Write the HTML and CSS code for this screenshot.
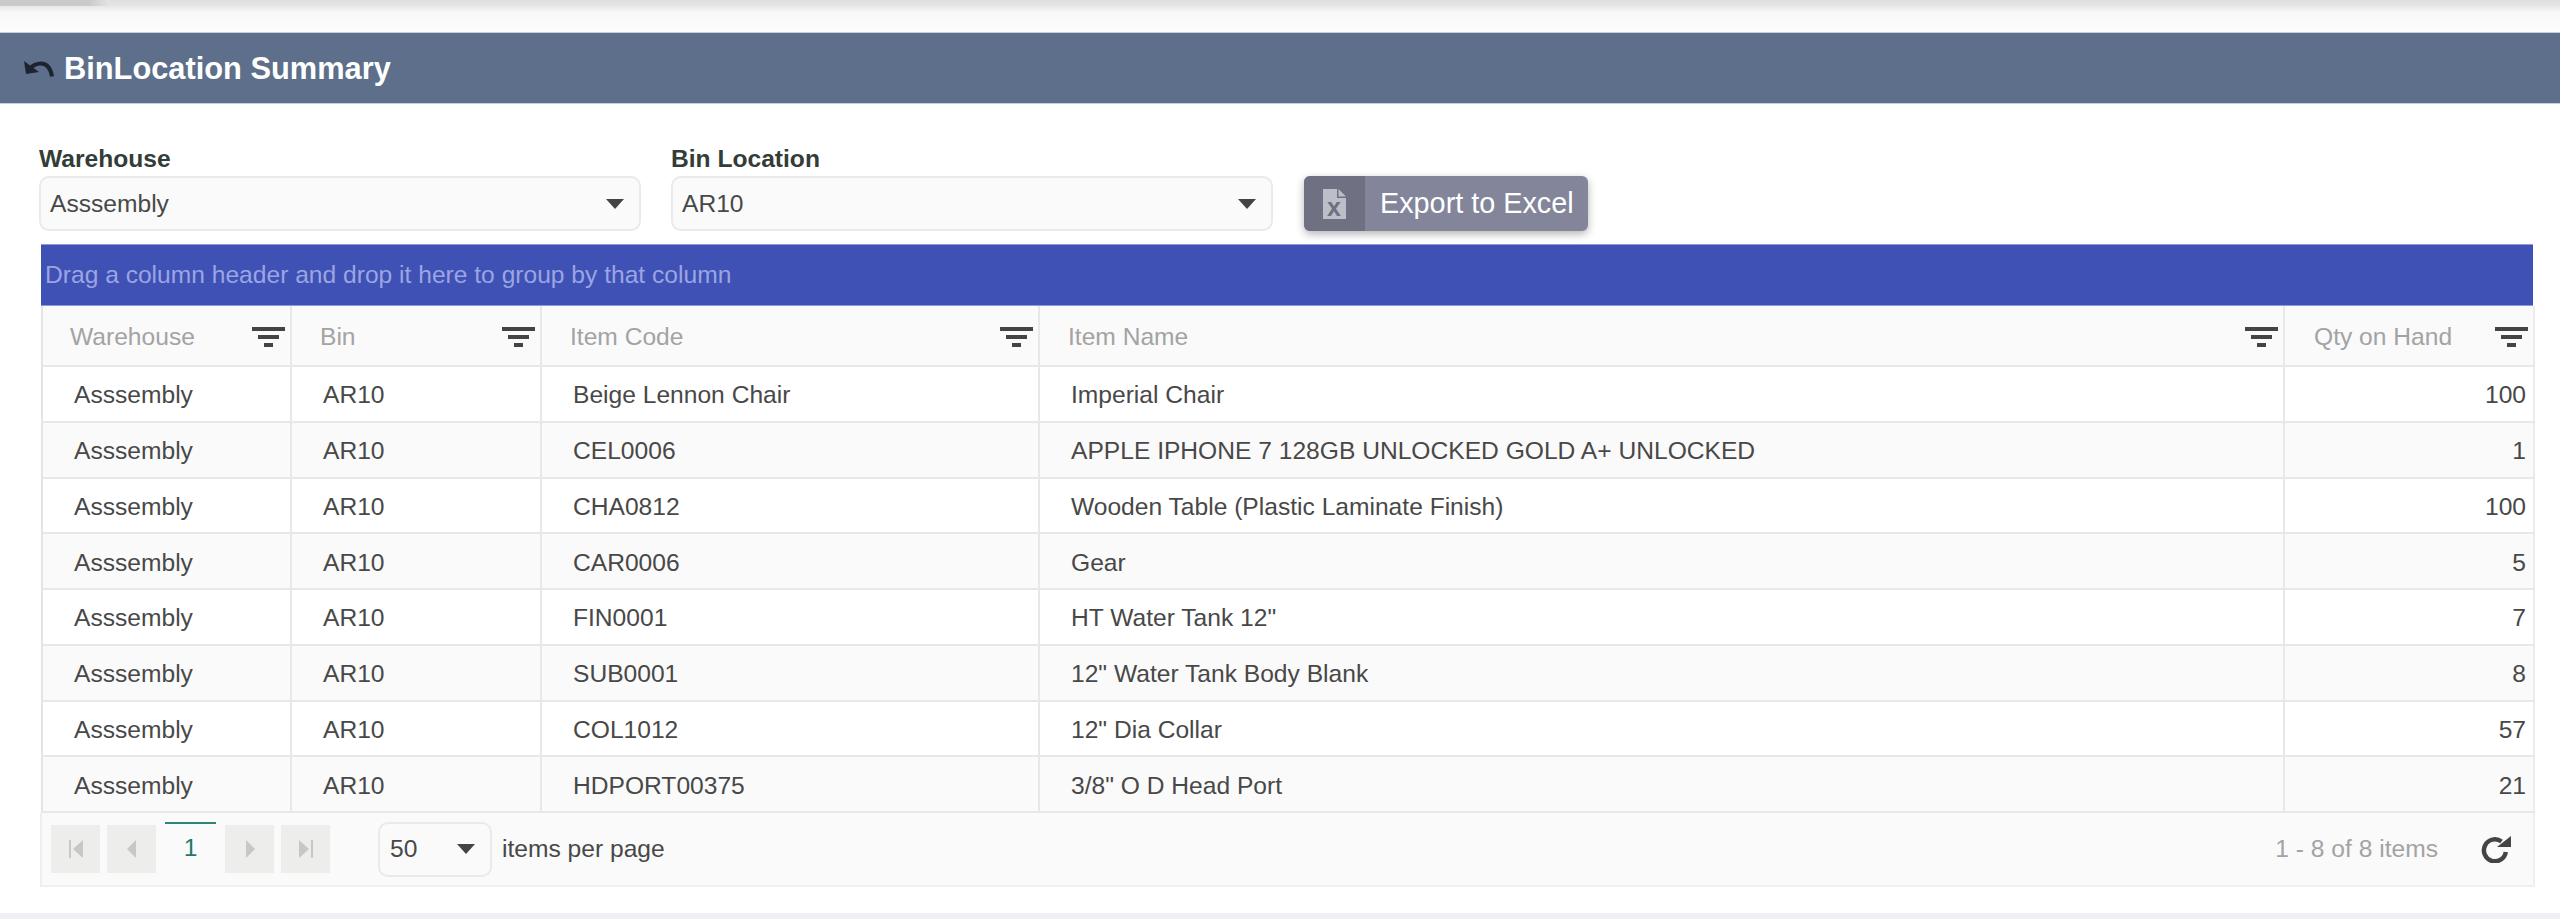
FILE: index.html
```html
<!DOCTYPE html>
<html lang="en">
<head>
<meta charset="utf-8">
<title>BinLocation Summary</title>
<link rel="stylesheet" href="styles.css">
</head>
<body>
<div class="topbar"><div class="toptab"></div></div>
<header class="title-bar">
  <svg class="back-icon" viewBox="0 0 30 16" width="30" height="16"><path d="M0 0l2 13 13-2z" fill="#1d2430"/><path d="M5 8C9 4 13 2.500 17 2.500c5.500 0 9.500 4 11 13" fill="none" stroke="#1d2430" stroke-width="4"/></svg>
  <h1 class="title">BinLocation Summary</h1>
</header>
<section class="filters">
  <div class="field">
    <label class="field-label">Warehouse</label>
    <div class="select select-wide"><span>Asssembly</span><i class="caret"></i></div>
  </div>
  <div class="field">
    <label class="field-label">Bin Location</label>
    <div class="select select-wide"><span>AR10</span><i class="caret"></i></div>
  </div>
  <button class="export" type="button">
    <span class="export-icon">
      <svg class="export-svg" viewBox="0 0 23 34" width="23" height="34"><path d="M0 0h14v9h9v21H0z" fill="#bcbec8"/><path d="M15.500 0L23 7.500h-7.500z" fill="#bcbec8"/><text x="11" y="27" text-anchor="middle" class="export-x">x</text></svg>
    </span>
    <span class="export-text">Export to Excel</span>
  </button>
</section>
<section class="grid">
  <div class="group-band">Drag a column header and drop it here to group by that column</div>
  <table class="table">
    <colgroup><col class="c1"><col class="c2"><col class="c3"><col class="c4"><col class="c5"></colgroup>
    <thead>
      <tr>
        <th><div class="th"><span>Warehouse</span><svg class="filter" viewBox="0 0 33 22"><path d="M0 0h33v4H0zM6 8h21v4H6zM12 16h9v4h-9z"/></svg></div></th>
        <th><div class="th"><span>Bin</span><svg class="filter" viewBox="0 0 33 22"><path d="M0 0h33v4H0zM6 8h21v4H6zM12 16h9v4h-9z"/></svg></div></th>
        <th><div class="th"><span>Item Code</span><svg class="filter" viewBox="0 0 33 22"><path d="M0 0h33v4H0zM6 8h21v4H6zM12 16h9v4h-9z"/></svg></div></th>
        <th><div class="th"><span>Item Name</span><svg class="filter" viewBox="0 0 33 22"><path d="M0 0h33v4H0zM6 8h21v4H6zM12 16h9v4h-9z"/></svg></div></th>
        <th><div class="th"><span>Qty on Hand</span><svg class="filter" viewBox="0 0 33 22"><path d="M0 0h33v4H0zM6 8h21v4H6zM12 16h9v4h-9z"/></svg></div></th>
      </tr>
    </thead>
    <tbody>
      <tr><td>Asssembly</td><td>AR10</td><td>Beige Lennon Chair</td><td>Imperial Chair</td><td class="num">100</td></tr>
      <tr><td>Asssembly</td><td>AR10</td><td>CEL0006</td><td>APPLE IPHONE 7 128GB UNLOCKED GOLD A+ UNLOCKED</td><td class="num">1</td></tr>
      <tr><td>Asssembly</td><td>AR10</td><td>CHA0812</td><td>Wooden Table (Plastic Laminate Finish)</td><td class="num">100</td></tr>
      <tr><td>Asssembly</td><td>AR10</td><td>CAR0006</td><td>Gear</td><td class="num">5</td></tr>
      <tr><td>Asssembly</td><td>AR10</td><td>FIN0001</td><td>HT Water Tank 12"</td><td class="num">7</td></tr>
      <tr><td>Asssembly</td><td>AR10</td><td>SUB0001</td><td>12" Water Tank Body Blank</td><td class="num">8</td></tr>
      <tr><td>Asssembly</td><td>AR10</td><td>COL1012</td><td>12" Dia Collar</td><td class="num">57</td></tr>
      <tr><td>Asssembly</td><td>AR10</td><td>HDPORT00375</td><td>3/8" O D Head Port</td><td class="num">21</td></tr>
    </tbody>
  </table>
  <footer class="pager">
    <div class="pager-left">
      <div class="page-nav">
        <span class="page-btn"><svg viewBox="0 0 18 24" width="18" height="24"><path d="M2 3h2v18H2zM16 3v18L6 12z"/></svg></span>
        <span class="page-btn"><svg viewBox="0 0 18 24" width="18" height="24"><path d="M13 3v18L4 12z"/></svg></span>
        <span class="page-current">1</span>
        <span class="page-btn"><svg viewBox="0 0 18 24" width="18" height="24"><path d="M5 3v18l9-9z"/></svg></span>
        <span class="page-btn"><svg viewBox="0 0 18 24" width="18" height="24"><path d="M2 3v18l10-9zM14 3h2v18h-2z"/></svg></span>
      </div>
      <div class="select select-size"><span>50</span><i class="caret"></i></div>
      <span class="per-page">items per page</span>
    </div>
    <div class="pager-right">
      <span class="page-info">1 - 8 of 8 items</span>
      <svg class="refresh" viewBox="0 0 30 28" width="30" height="28"><path d="M24.800 17A11 11 0 1 1 20.500 6.500" fill="none" stroke="#444" stroke-width="4.500"/><path d="M30 1v11H16z" fill="#444"/></svg>
    </div>
  </footer>
</section>
<div class="bottom-strip"></div>
</body>
</html>
```
FILE: styles.css
```css
* { box-sizing: border-box; }
html, body { margin: 0; padding: 0; background: #fff; }
body {
  height: 919px;
  overflow: hidden;
  font-family: "Liberation Sans", Arial, sans-serif;
  font-size: 24.6px;
  color: #484848;
  display: flex;
  flex-direction: column;
}
.topbar {
  height: 32px;
  flex: none;
  background: linear-gradient(#dedede 0, #e4e4e4 5px, #f8f8f8 12px, #fdfdfd 30px);
}
.toptab {
  width: 110px;
  height: 6px;
  background: linear-gradient(90deg, #cacaca 80%, #e4e4e4);
}
.title-bar {
  flex: none;
  height: 72px;
  display: flex;
  align-items: center;
  padding-left: 24px;
  background: #5d6f8a;
  border-top: 1px solid #c8d0e0;
  border-bottom: 1px solid #c8d0e0;
}
.back-icon { margin-right: 10px; margin-top: 2px; }
.title {
  margin: 0;
  padding-top: 2px;
  font-size: 30.8px;
  font-weight: 700;
  color: #fff;
}
.filters {
  flex: none;
  display: flex;
  align-items: flex-end;
  padding: 0 0 13px 39px;
  height: 140px;
}
.field { margin-right: 30px; }
.field-label {
  display: block;
  font-size: 24.6px;
  font-weight: 700;
  line-height: 30px;
  margin-bottom: 2px;
  color: #333d38;
}
.select {
  display: flex;
  align-items: center;
  justify-content: space-between;
  height: 55px;
  padding: 0 15px 0 9px;
  background: #fafafa;
  border: 2px solid #eaeaea;
  border-radius: 10px;
  font-size: 24.6px;
  color: #484848;
}
.select-wide { width: 602px; }
.caret {
  width: 0;
  height: 0;
  border-left: 9px solid transparent;
  border-right: 9px solid transparent;
  border-top: 10px solid #444;
}
.export {
  display: flex;
  align-items: stretch;
  width: 284px;
  height: 55px;
  margin-left: 1px;
  padding: 0;
  border: 0;
  border-radius: 6px;
  overflow: hidden;
  background: #83859a;
  color: #fff;
  font-family: inherit;
  box-shadow: 0 3px 8px rgba(0,0,0,.3);
}
.export-icon {
  width: 61px;
  display: flex;
  align-items: center;
  justify-content: center;
  background: #6f7183;
}
.export-svg { margin-top: 4px; }
.export-x { font-size: 25px; font-weight: 700; fill: #6f7183; font-family: "Liberation Sans", sans-serif; }
.export-text {
  flex: 1;
  font-size: 28.8px;
  line-height: 55px;
  text-align: left;
  padding-left: 15px;
  white-space: nowrap;
}
.grid {
  flex: none;
  width: 2492px;
  margin: 0 0 0 41px;
}
.group-band {
  height: 62px;
  line-height: 60px;
  padding-left: 4px;
  background: #3f51b5;
  border-top: 1px solid #8d99d8;
  border-bottom: 1px solid #8d99d8;
  color: #9aa5e2;
  font-size: 24.6px;
}
.table {
  width: 2492px;
  border-collapse: collapse;
  table-layout: fixed;
  border-left: 2px solid #e4e4e4;
  border-right: 2px solid #ececec;
}
.c1 { width: 249px; }
.c2 { width: 250px; }
.c3 { width: 498px; }
.c4 { width: 1245px; }
.c5 { width: 250px; }
th {
  height: 60px;
  padding: 0;
  background: #fafafa;
  border-right: 2px solid #e8e8e8;
  border-bottom: 2px solid #e8e8e8;
  font-weight: 400;
  text-align: left;
  color: #a3a3a3;
  font-size: 24.6px;
}
.th {
  display: flex;
  align-items: center;
  justify-content: space-between;
  padding: 2px 5px 0 28px;
}
th:first-child .th { padding-left: 27px; }
th:last-child .th { padding-left: 29px; }
.filter { width: 33px; height: 22px; fill: #444; margin-top: 2px; }
td {
  height: 55.75px;
  padding: 3px 0 0 31px;
  border-right: 2px solid #e8e8e8;
  border-bottom: 2px solid #e8e8e8;
  font-size: 24.6px;
  color: #484848;
  white-space: nowrap;
  background: #fff;
}
tbody tr:nth-child(even) td { background: #fafafa; }
td.num { text-align: right; padding: 3px 7px 0 0; }
th:last-child, td:last-child { border-right: 0; }
.pager {
  height: 74px;
  margin: 0 -2px 0 -1px;
  display: flex;
  align-items: center;
  justify-content: space-between;
  background: #fafafa;
  border: 2px solid #efefef;
  border-top: 0;
  padding: 0 22px 0 9px;
}
.pager-left, .pager-right, .page-nav { display: flex; align-items: center; }
.page-nav { gap: 7px; margin-right: 48px; }
.page-btn {
  width: 49px;
  height: 48px;
  display: flex;
  align-items: center;
  justify-content: center;
  background: #ededeb;
  fill: #c6c8c4;
}
.page-current {
  width: 51px;
  height: 52px;
  margin: -2px 2px 0;
  border-top: 2px solid #2f8577;
  text-align: center;
  line-height: 48px;
  color: #1f7a6c;
  font-size: 24.6px;
}
.select-size { width: 114px; height: 55px; padding: 0 15px 0 10px; }
.per-page { margin-left: 10px; color: #484848; }
.page-info { color: #a3a3a3; margin-right: 43px; }
.bottom-strip {
  margin-top: auto;
  height: 6px;
  background: #eef0f4;
}
```
